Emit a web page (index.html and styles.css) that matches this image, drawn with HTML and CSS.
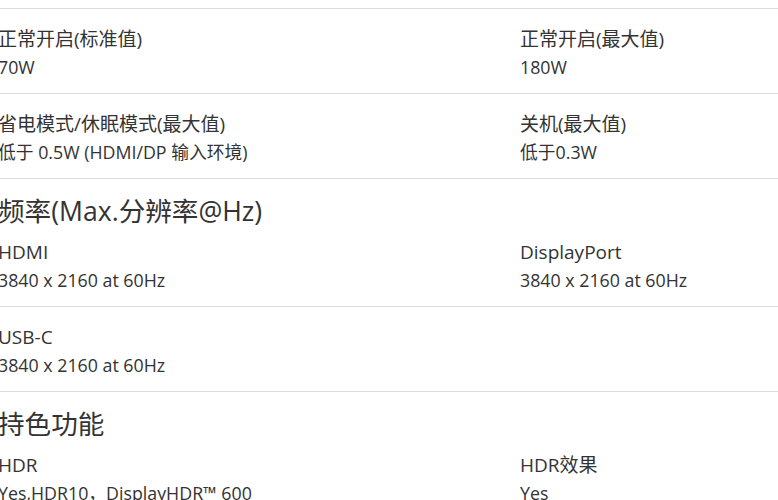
FILE: index.html
```html
<!DOCTYPE html>
<html lang="zh-CN">
<head>
  <meta charset="UTF-8">
  <meta name="viewport" content="width=device-width, initial-scale=1">
  <title>规格参数</title>
  <link rel="stylesheet" href="styles.css">
</head>
<body>
  <div class="specs">
    <div class="spec-group first">
      <div class="spec-row">
        <div class="spec-item">
          <div class="spec-label">正常开启(标准值)</div>
          <div class="spec-value">70W</div>
        </div>
        <div class="spec-item">
          <div class="spec-label">正常开启(最大值)</div>
          <div class="spec-value">180W</div>
        </div>
      </div>
      <div class="spec-row">
        <div class="spec-item">
          <div class="spec-label">省电模式/休眠模式(最大值)</div>
          <div class="spec-value">低于 0.5W (HDMI/DP 输入环境)</div>
        </div>
        <div class="spec-item">
          <div class="spec-label">关机(最大值)</div>
          <div class="spec-value">低于0.3W</div>
        </div>
      </div>
    </div>

    <div class="spec-group">
      <h3 class="spec-title">频率(Max.分辨率@Hz)</h3>
      <div class="spec-row">
        <div class="spec-item">
          <div class="spec-label">HDMI</div>
          <div class="spec-value">3840 x 2160 at 60Hz</div>
        </div>
        <div class="spec-item">
          <div class="spec-label">DisplayPort</div>
          <div class="spec-value">3840 x 2160 at 60Hz</div>
        </div>
      </div>
      <div class="spec-row">
        <div class="spec-item">
          <div class="spec-label">USB-C</div>
          <div class="spec-value">3840 x 2160 at 60Hz</div>
        </div>
      </div>
    </div>

    <div class="spec-group">
      <h3 class="spec-title">持色功能</h3>
      <div class="spec-row">
        <div class="spec-item">
          <div class="spec-label">HDR</div>
          <div class="spec-value">Yes,HDR10，DisplayHDR™ 600</div>
        </div>
        <div class="spec-item">
          <div class="spec-label">HDR效果</div>
          <div class="spec-value">Yes</div>
        </div>
      </div>
    </div>
  </div>
</body>
</html>
```

FILE: styles.css
```css
body {
  margin: 0;
  padding: 0;
  background-color: #fff;
  color: #333;
  font-family: "Open Sans", "Noto Sans CJK SC", sans-serif;
  overflow: hidden;
}
.specs {
  margin-left: -2px;
  width: 800px;
}
.spec-group.first {
  margin-top: 8px;
  border-top: 1px solid #dcdcdc;
}
.spec-title {
  margin: 0;
  padding-top: 14px;
  font-size: 26.6px;
  font-weight: normal;
  line-height: 36px;
}
.spec-row {
  display: grid;
  grid-template-columns: 522px 1fr;
  padding: 16px 0 12px;
  border-bottom: 1px solid #dcdcdc;
}
.spec-title + .spec-row {
  padding-top: 9px;
}
.spec-label,
.spec-value {
  font-size: 19px;
  line-height: 28px;
  white-space: nowrap;
}
.spec-value {
  font-size: 17.8px;
}
```
